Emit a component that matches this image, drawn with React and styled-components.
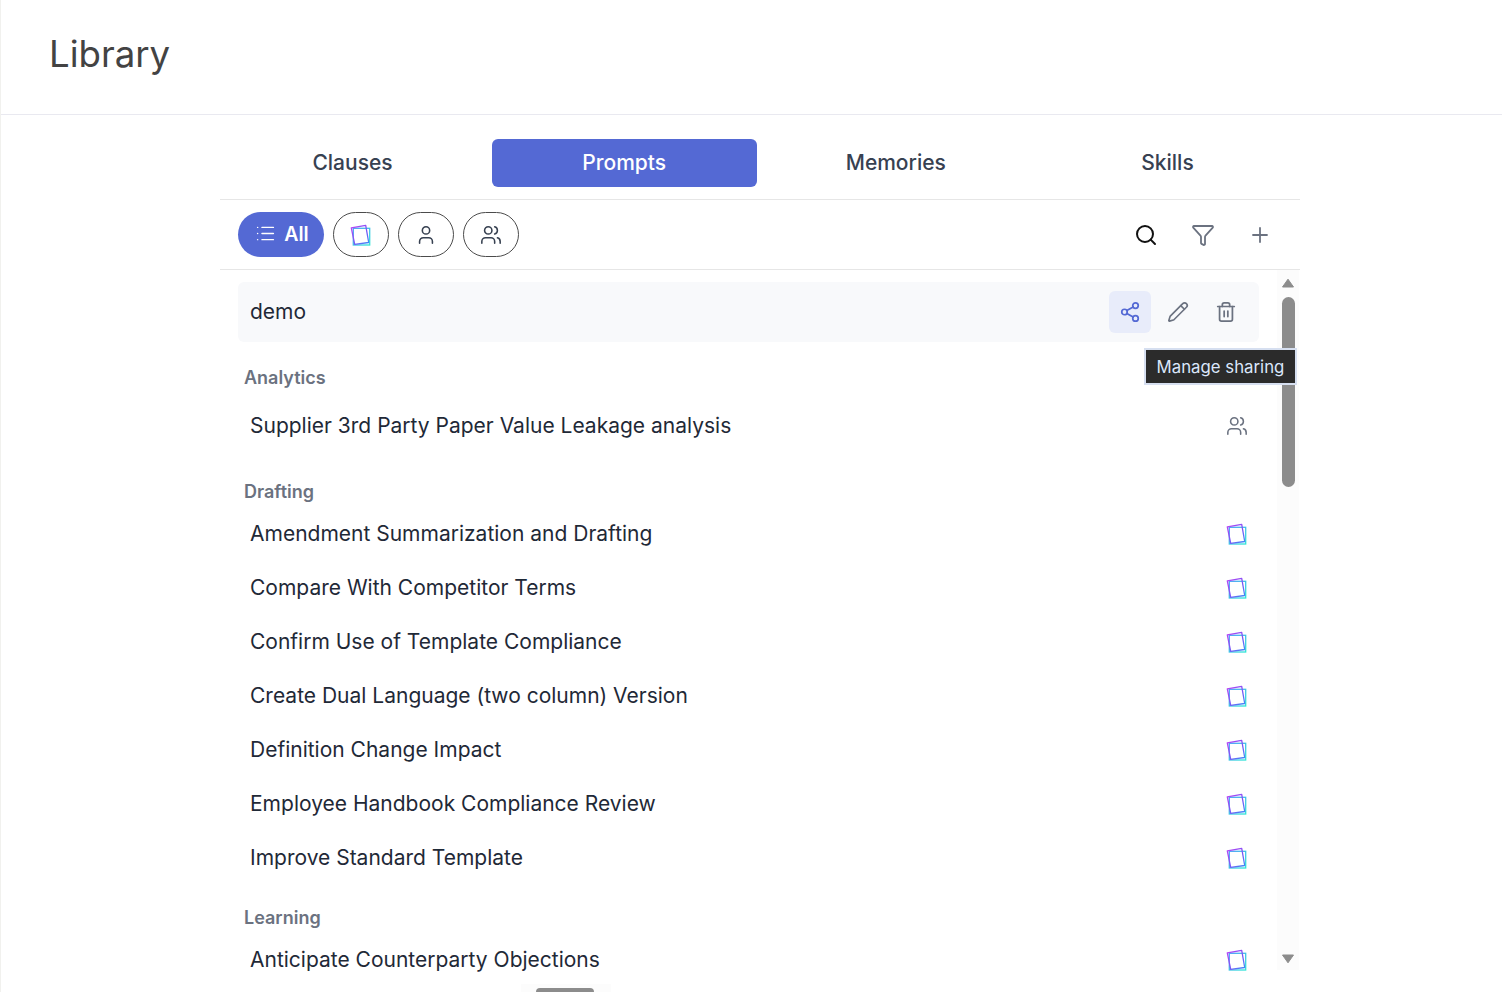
import React from 'react';
import styled, { createGlobalStyle } from 'styled-components';
import { List, User, Users, Search, Funnel, Plus, Share2, Pencil, Trash2 } from 'lucide-react';

const GlobalStyle = createGlobalStyle`
  html, body {
    margin: 0;
    height: 992px;
    overflow: hidden;
    background: #fff;
    font-family: Inter, "Noto Sans", sans-serif;
  }
`;

const Page = styled.div`
  height: 992px;
  border-left: 1px solid #f1f1ee;
  position: relative;
  overflow: hidden;
`;

const Header = styled.header`
  box-sizing: border-box;
  height: 115px;
  border-bottom: 1px solid #e9e9f0;
  padding: 32px 0 0 48px;
`;

const Title = styled.h1`
  margin: 0;
  font-size: 36.6px;
  line-height: 44px;
  font-weight: 400;
  color: #434343;
`;

const Main = styled.main`
  width: 1080px;
  margin-left: 219px;
`;

const Tabs = styled.div`
  display: grid;
  grid-template-columns: repeat(4, 265px);
  justify-content: space-between;
  padding: 24px 0 12px;
  border-bottom: 1px solid #e6e6e6;
`;

const Tab = styled.div`
  height: 48px;
  box-sizing: border-box;
  padding-bottom: 1px;
  display: flex;
  align-items: center;
  justify-content: center;
  border-radius: 6px;
  font-size: 21px;
  font-weight: 500;
  color: ${p => (p.$active ? '#fff' : '#374151')};
  background: ${p => (p.$active ? '#5469d4' : 'transparent')};
`;

const Toolbar = styled.div`
  height: 70px;
  box-sizing: border-box;
  display: flex;
  align-items: center;
  justify-content: space-between;
  padding: 0 28px 0 18px;
  border-bottom: 1px solid #e6e6e6;
`;

const Chips = styled.div`
  display: flex;
  gap: 9px;
`;

const Chip = styled.div`
  width: 56px;
  height: 45px;
  box-sizing: border-box;
  display: flex;
  align-items: center;
  justify-content: center;
  border: 1px solid #4b4b4b;
  border-radius: 23px;
  color: #374151;
`;

const AllChip = styled(Chip)`
  width: 86px;
  gap: 8px;
  padding: 0 0 2px 2px;
  border: 0;
  background: #5469d4;
  color: #fff;
  font-size: 19.5px;
  font-weight: 600;
`;

const ToolActions = styled.div`
  display: flex;
  align-items: center;
  gap: 33px;
`;

const ToolIcon = styled.span`
  display: flex;
  color: ${p => p.$color || '#6b7280'};
`;

const Body = styled.div`
  display: flex;
  align-items: flex-start;
  padding-left: 18px;
`;

const Content = styled.div`
  width: 1021px;
  margin-right: 18px;
  padding-top: 12px;
`;

const DemoRow = styled.div`
  height: 60px;
  box-sizing: border-box;
  display: flex;
  align-items: center;
  justify-content: space-between;
  padding: 0 12px;
  background: #f8f9fb;
  border-radius: 6px;
  font-size: 21px;
  color: #1f2937;
`;

const DemoName = styled.span`
  margin-top: -1px;
`;

const RowActions = styled.div`
  display: flex;
  gap: 6px;
`;

const ActionButton = styled.div`
  width: 42px;
  height: 42px;
  display: flex;
  align-items: center;
  justify-content: center;
  border-radius: 6px;
  color: ${p => (p.$active ? '#5469d4' : '#6b7280')};
  background: ${p => (p.$active ? '#e8ecfa' : 'transparent')};
`;

const Heading = styled.div`
  height: 30px;
  margin: ${p => p.$top}px 0 ${p => p.$bottom || 0}px;
  padding: 0 0 2px 6px;
  box-sizing: border-box;
  display: flex;
  align-items: center;
  font-size: 18px;
  font-weight: 600;
  color: #6b7280;
`;

const Row = styled.div`
  height: 54px;
  display: flex;
  align-items: center;
  justify-content: space-between;
  padding: 0 12px;
  font-size: 21px;
  color: #1f2937;
`;

const RowTitle = styled.span`
  margin-top: -1px;
`;

const RowIcon = styled.span`
  display: flex;
  color: #6b7280;
  margin-right: -1px;
`;

const Track = styled.div`
  width: 22px;
  height: 700px;
  flex: none;
  display: flex;
  flex-direction: column;
  align-items: center;
  background: #fcfcfc;
`;

const ArrowSvg = styled.svg`
  flex: none;
  margin-top: ${p => (p.$down ? 'auto' : '8px')};
  margin-bottom: ${p => (p.$down ? '6px' : '0')};
`;

const Thumb = styled.div`
  width: 13px;
  height: 190px;
  margin-top: 9px;
  border-radius: 7px;
  background: #8c8c8c;
`;

const Tooltip = styled.div`
  position: absolute;
  left: 1143px;
  top: 348px;
  width: 153px;
  height: 37px;
  box-sizing: border-box;
  display: flex;
  align-items: center;
  justify-content: center;
  background: #2b2b2b;
  border: 2px solid #d6dff0;
  font-size: 16.8px;
  color: #dbe7fb;
`;

const BottomTrack = styled.div`
  position: absolute;
  left: 520px;
  top: 984px;
  width: 90px;
  height: 8px;
  background: #fcfcfc;
`;

const BottomThumb = styled.div`
  width: 58px;
  height: 4px;
  margin: 4px 0 0 15px;
  border-radius: 4px 4px 0 0;
  background: #8c8c8c;
`;

const Arrow = ({ down }) => (
  <ArrowSvg $down={down} width="14" height="10" viewBox="0 0 14 10">
    <path
      d={down ? 'M1.5 1h11L7 8.8z' : 'M7 1.2L12.5 9h-11z'}
      fill="#8c8c8c"
      stroke="#8c8c8c"
      strokeWidth="1"
      strokeLinejoin="round"
    />
  </ArrowSvg>
);

const PromptIcon = () => (
  <svg width="22" height="22" viewBox="0 0 22 22" fill="none">
    <defs>
      <linearGradient id="promptPurple" gradientUnits="userSpaceOnUse" x1="2" y1="2" x2="18" y2="20">
        <stop offset="0" stopColor="#b545f5" />
        <stop offset="0.55" stopColor="#7a55f5" />
        <stop offset="1" stopColor="#3f8cf7" />
      </linearGradient>
      <linearGradient id="promptTeal" gradientUnits="userSpaceOnUse" x1="3" y1="4" x2="20" y2="21">
        <stop offset="0" stopColor="#4f9df7" />
        <stop offset="1" stopColor="#30e6d6" />
      </linearGradient>
    </defs>
    <rect x="3.3" y="4.3" width="16.4" height="16.7" stroke="url(#promptTeal)" strokeWidth="1.3" />
    <path d="M1.3 3.9L15.7 1.4L18.7 18.5L4.7 20.4Z" stroke="url(#promptPurple)" strokeWidth="1.3" strokeLinejoin="round" />
  </svg>
);

const groups = [
  {
    name: 'Analytics',
    top: 21,
    bottom: 6,
    items: [{ title: 'Supplier 3rd Party Paper Value Leakage analysis', shared: true }],
  },
  {
    name: 'Drafting',
    top: 24,
    items: [
      { title: 'Amendment Summarization and Drafting' },
      { title: 'Compare With Competitor Terms' },
      { title: 'Confirm Use of Template Compliance' },
      { title: 'Create Dual Language (two column) Version' },
      { title: 'Definition Change Impact' },
      { title: 'Employee Handbook Compliance Review' },
      { title: 'Improve Standard Template' },
    ],
  },
  {
    name: 'Learning',
    top: 18,
    items: [{ title: 'Anticipate Counterparty Objections' }],
  },
];

const App = () => (
  <Page>
    <GlobalStyle />
    <Header>
      <Title>Library</Title>
    </Header>
    <Main>
      <Tabs>
        <Tab>Clauses</Tab>
        <Tab $active>Prompts</Tab>
        <Tab>Memories</Tab>
        <Tab>Skills</Tab>
      </Tabs>
      <Toolbar>
        <Chips>
          <AllChip><List size={21} strokeWidth={1.7} />All</AllChip>
          <Chip><PromptIcon /></Chip>
          <Chip><User size={22} strokeWidth={1.7} /></Chip>
          <Chip><Users size={22} strokeWidth={1.7} /></Chip>
        </Chips>
        <ToolActions>
          <ToolIcon $color="#111"><Search size={24} strokeWidth={2} /></ToolIcon>
          <ToolIcon><Funnel size={24} strokeWidth={1.8} /></ToolIcon>
          <ToolIcon><Plus size={24} strokeWidth={1.8} /></ToolIcon>
        </ToolActions>
      </Toolbar>
      <Body>
        <Content>
          <DemoRow>
            <DemoName>demo</DemoName>
            <RowActions>
              <ActionButton $active><Share2 size={22} strokeWidth={1.9} /></ActionButton>
              <ActionButton><Pencil size={22} strokeWidth={1.8} /></ActionButton>
              <ActionButton><Trash2 size={22} strokeWidth={1.9} /></ActionButton>
            </RowActions>
          </DemoRow>
          {groups.map(group => (
            <section key={group.name}>
              <Heading $top={group.top} $bottom={group.bottom}>{group.name}</Heading>
              {group.items.map(item => (
                <Row key={item.title}>
                  <RowTitle>{item.title}</RowTitle>
                  <RowIcon>
                    {item.shared ? <Users size={22} strokeWidth={1.7} /> : <PromptIcon />}
                  </RowIcon>
                </Row>
              ))}
            </section>
          ))}
        </Content>
        <Track>
          <Arrow />
          <Thumb />
          <Arrow down />
        </Track>
      </Body>
    </Main>
    <Tooltip>Manage sharing</Tooltip>
    <BottomTrack><BottomThumb /></BottomTrack>
  </Page>
);

export default App;
